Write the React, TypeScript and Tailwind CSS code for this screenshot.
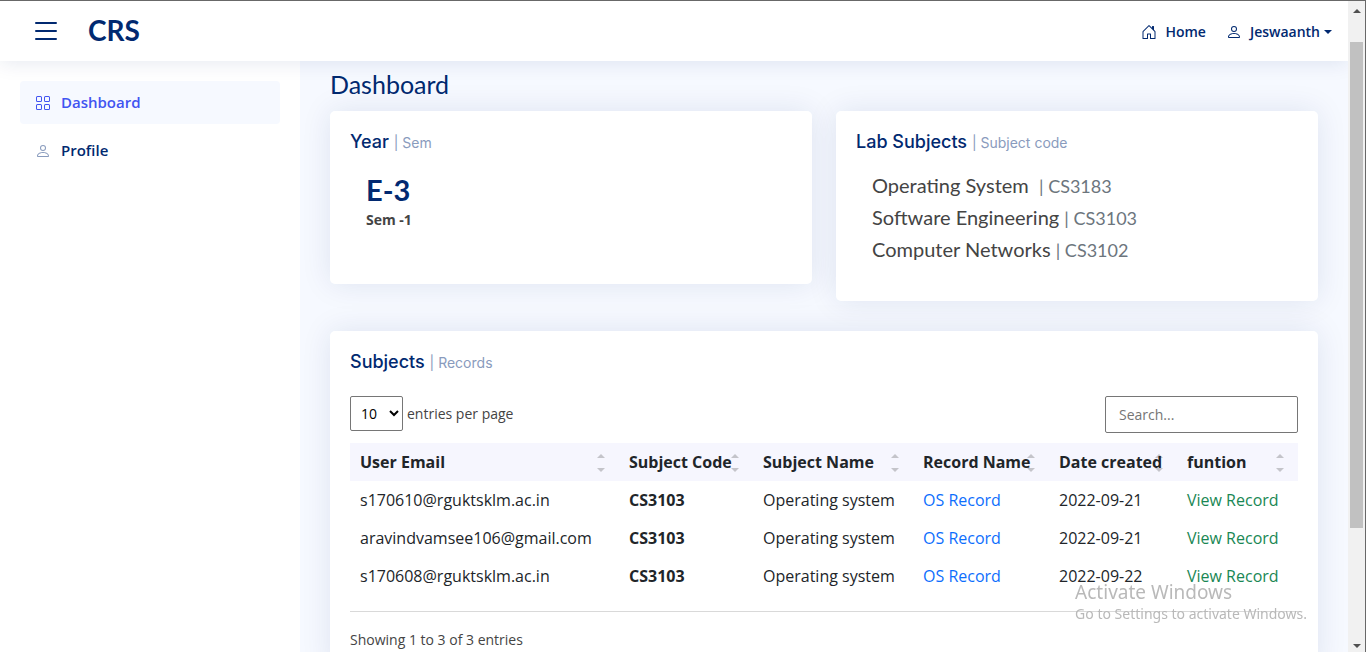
import type { ReactNode } from "react";
import { BsGrid, BsHouseDoor, BsList, BsPerson } from "react-icons/bs";

const labSubjects = [
  { name: "Operating System\u00a0", code: "CS3183" },
  { name: "Software Engineering", code: "CS3103" },
  { name: "Computer Networks", code: "CS3102" },
];

const columns = [
  { label: "User Email", width: "w-[269px]" },
  { label: "Subject Code", width: "w-[134px]" },
  { label: "Subject Name", width: "w-[160px]" },
  { label: "Record Name", width: "w-[136px]" },
  { label: "Date created", width: "w-[128px]" },
  { label: "funtion", width: "w-[121px]" },
];

const records = [
  { email: "s170610@rguktsklm.ac.in", date: "2022-09-21" },
  { email: "aravindvamsee106@gmail.com", date: "2022-09-21" },
  { email: "s170608@rguktsklm.ac.in", date: "2022-09-22" },
];

function Header() {
  return (
    <header className="z-10 flex h-[60px] shrink-0 items-center justify-between bg-white pr-4 pl-[30px] text-[#012970] shadow-[0_2px_20px_rgba(1,41,112,0.1)]">
      <div className="flex items-center gap-[26px]">
        <button type="button" aria-label="Toggle sidebar">
          <BsList className="size-8" />
        </button>
        <a href="#" className="pb-0.5 font-[Lato,sans-serif] text-[28px] leading-8 font-bold">
          CRS
        </a>
      </div>
      <nav className="flex items-center gap-5 pt-0.5 text-sm font-semibold">
        <a href="#" className="flex items-center gap-2">
          <BsHouseDoor className="size-4" />
          Home
        </a>
        <button type="button" className="flex items-center gap-2">
          <BsPerson className="size-4" />
          <span className="flex items-center gap-1">
            Jeswaanth
            <svg viewBox="0 0 8 4" className="h-1 w-2" fill="currentColor" aria-hidden="true">
              <path d="M0 0h8L4 4z" />
            </svg>
          </span>
        </button>
      </nav>
    </header>
  );
}

function Sidebar() {
  return (
    <aside className="w-[300px] shrink-0 bg-white p-5">
      <nav className="flex flex-col gap-[5px] text-[15px] font-semibold">
        <a href="#" className="flex h-[43px] items-center gap-[10px] rounded bg-[#f6f9ff] px-[15px] text-[#4154f1]">
          <BsGrid className="size-4" />
          Dashboard
        </a>
        <a href="#" className="flex h-[43px] items-center gap-[10px] rounded px-[15px] text-[#012970]">
          <BsPerson className="size-4 text-[#899bbd]" />
          Profile
        </a>
      </nav>
    </aside>
  );
}

function Card({ title, note, children }: { title: string; note: string; children: ReactNode }) {
  return (
    <section className="rounded-[5px] bg-white px-5 shadow-[0_0_30px_rgba(1,41,112,0.1)]">
      <h2 className="pt-5 pb-[15px] font-[Inter,sans-serif] text-lg leading-[22px] font-medium text-[#012970]">
        {title} <span className="text-sm leading-4 font-normal text-[#899bbd]">| {note}</span>
      </h2>
      {children}
    </section>
  );
}

function Sorter() {
  return (
    <svg viewBox="0 0 8 18" className="absolute top-1 right-1 h-[18px] w-2" fill="#c4c4ca" aria-hidden="true">
      <path d="M0 4h8L4 0zM0 14h8L4 18z" />
    </svg>
  );
}

function RecordsTable() {
  return (
    <table className="w-full table-fixed text-left text-base leading-6 text-[#212529]">
      <colgroup>
        {columns.map((c) => (
          <col key={c.label} className={c.width} />
        ))}
      </colgroup>
      <thead>
        <tr className="h-[38px] bg-[#f6f6fe]">
          {columns.map((c) => (
            <th key={c.label} scope="col" className="px-[10px] font-bold whitespace-nowrap">
              <button type="button" className="relative block w-full text-left">
                <Sorter />
                <span className="relative">{c.label}</span>
              </button>
            </th>
          ))}
        </tr>
      </thead>
      <tbody>
        {records.map((r) => (
          <tr key={r.email} className="h-[38px] whitespace-nowrap">
            <td className="px-[10px]">{r.email}</td>
            <th scope="row" className="px-[10px] font-bold">
              CS3103
            </th>
            <td className="px-[10px]">Operating system</td>
            <td className="px-[10px]">
              <a href="#" className="text-[#0d6efd]">
                OS Record
              </a>
            </td>
            <td className="px-[10px]">{r.date}</td>
            <td className="px-[10px]">
              <a href="#" className="text-[#198754]">
                View Record
              </a>
            </td>
          </tr>
        ))}
      </tbody>
    </table>
  );
}

function Main() {
  return (
    <main className="min-w-0 flex-1 overflow-hidden bg-[#f6f9ff] px-[30px] pt-2">
      <h1 className="mb-3 font-[Lato,sans-serif] text-[25px] leading-[30px] text-[#012970]">Dashboard</h1>
      <div className="mb-[30px] grid grid-cols-2 items-start gap-6">
        <Card title="Year" note="Sem">
          <div className="px-4 pt-0.5 pb-[54px]">
            <p className="font-[Lato,sans-serif] text-[29px] leading-10 font-bold text-[#012970]">E-3</p>
            <p className="text-sm leading-5 font-bold">Sem -1</p>
          </div>
        </Card>
        <Card title="Lab Subjects" note="Subject code">
          <ul className="px-4 pt-px pb-9 font-[Lato,sans-serif]">
            {labSubjects.map((s) => (
              <li key={s.code} className="h-8 text-xl leading-8">
                {s.name} <span className="text-lg leading-6 text-[#6c757d]">| {s.code}</span>
              </li>
            ))}
          </ul>
        </Card>
      </div>
      <Card title="Subjects" note="Records">
        <div className="flex items-start justify-between pt-2 pb-[10px] text-sm">
          <label className="flex items-center gap-1">
            <select className="h-[35px] w-[53px] rounded-xs border border-[#767676] bg-white pl-1.5 text-black">
              <option>10</option>
            </select>
            entries per page
          </label>
          <input
            type="search"
            aria-label="Search"
            placeholder="Search..."
            className="h-[37px] w-[193px] rounded-xs border border-[#767676] bg-white px-[13px] placeholder:text-[#757575]"
          />
        </div>
        <RecordsTable />
        <p className="mt-4 border-t border-[#d9d9d9] pt-[18px] pb-5 text-sm leading-5">Showing 1 to 3 of 3 entries</p>
      </Card>
    </main>
  );
}

function ScrollTrack() {
  return (
    <div className="flex w-[17px] shrink-0 flex-col items-center bg-[#f1f1f1] pt-2 pb-1" aria-hidden="true">
      <svg viewBox="0 0 8 4" className="h-1 w-2" fill="#505050">
        <path d="M0 4h8L4 0z" />
      </svg>
      <div className="mt-[29px] h-[76%] w-[13px] bg-[#c1c1c1]" />
      <svg viewBox="0 0 8 4" className="mt-auto h-1 w-2" fill="#505050">
        <path d="M0 0h8L4 4z" />
      </svg>
    </div>
  );
}

export default function App() {
  return (
    <div className="flex h-screen overflow-hidden border-t border-r border-[#686868] bg-white font-['Open_Sans',sans-serif] text-[#444444]">
      <div className="flex min-w-0 flex-1 flex-col overflow-hidden">
        <Header />
        <div className="flex min-h-0 flex-1">
          <Sidebar />
          <Main />
        </div>
      </div>
      <ScrollTrack />
      <div className="pointer-events-none fixed right-[59px] bottom-7 z-20 font-['Noto_Sans',sans-serif] text-[#b9b9b9]">
        <p className="text-[19px] leading-6">Activate Windows</p>
        <p className="text-sm leading-5">Go to Settings to activate Windows.</p>
      </div>
    </div>
  );
}
